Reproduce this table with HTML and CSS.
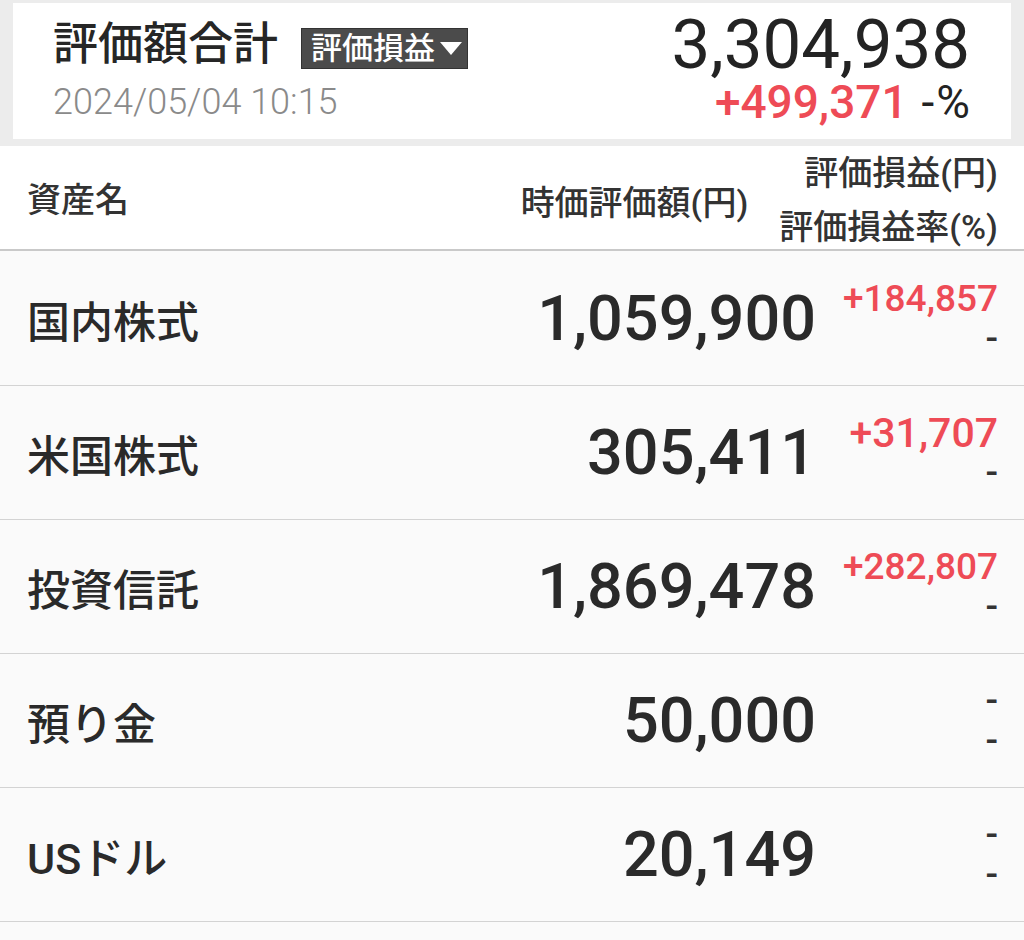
FILE: index.html
```html
<!DOCTYPE html>
<html lang="ja">
<head>
<meta charset="utf-8">
<title>評価額合計</title>
<link rel="stylesheet" href="styles.css">
</head>
<body>
<div class="summary">
  <div class="card">
    <div class="card-left">
      <div class="title-row">
        <span class="title">評価額合計</span>
        <span class="badge">評価損益<span class="caret"></span></span>
      </div>
      <div class="date">2024/05/04 10:15</div>
    </div>
    <div class="card-right">
      <div class="total">3,304,938</div>
      <div class="total-gain"><span class="plus">+499,371</span><span class="total-rate">-%</span></div>
    </div>
  </div>
</div>

<div class="table-head">
  <div class="th-name">資産名</div>
  <div class="th-value">時価評価額(円)</div>
  <div class="th-gain">
    <div>評価損益(円)</div>
    <div>評価損益率(%)</div>
  </div>
</div>

<div class="rows">
  <div class="row">
    <div class="name">国内株式</div>
    <div class="value">1,059,900</div>
    <div class="gain"><div class="pos">+184,857</div><div class="dash">-</div></div>
  </div>
  <div class="row">
    <div class="name">米国株式</div>
    <div class="value">305,411</div>
    <div class="gain"><div class="pos pos-lg">+31,707</div><div class="dash">-</div></div>
  </div>
  <div class="row">
    <div class="name">投資信託</div>
    <div class="value">1,869,478</div>
    <div class="gain"><div class="pos">+282,807</div><div class="dash">-</div></div>
  </div>
  <div class="row">
    <div class="name">預り金</div>
    <div class="value">50,000</div>
    <div class="gain"><div class="dash">-</div><div class="dash">-</div></div>
  </div>
  <div class="row">
    <div class="name">USドル</div>
    <div class="value">20,149</div>
    <div class="gain"><div class="dash">-</div><div class="dash">-</div></div>
  </div>
</div>
</body>
</html>
```

FILE: styles.css
```css
html, body {
  margin: 0;
  padding: 0;
}

body {
  background: #fafafa;
  font-family: Roboto, "Noto Sans CJK JP", sans-serif;
  color: #2b2b2b;
}

/* ---------- summary card ---------- */
.summary {
  background: #ececec;
  padding: 3px 13px 7px 13px;
}

.card {
  background: #ffffff;
  height: 136px;
  box-sizing: border-box;
  padding: 14px 41px 0 40px;
  display: flex;
  justify-content: space-between;
}

.title-row {
  display: flex;
  align-items: center;
  height: 56px;
}

.title {
  font-size: 45px;
  font-weight: 500;
  line-height: 56px;
  color: #262626;
}

.badge {
  display: inline-flex;
  align-items: center;
  height: 41px;
  box-sizing: border-box;
  margin-left: 23px;
  margin-top: 6px;
  padding: 0 5px 0 9px;
  background: #4b4b4b;
  border: 1px solid #333333;
  color: #ffffff;
  font-size: 31px;
  line-height: 39px;
  font-weight: 500;
}

.caret {
  width: 0;
  height: 0;
  margin-left: 5px;
  border-left: 11px solid transparent;
  border-right: 11px solid transparent;
  border-top: 13px solid #ffffff;
}

.date {
  font-size: 36px;
  font-weight: 300;
  line-height: 58px;
  color: #8a8a8a;
}

.card-right {
  text-align: right;
}

.total {
  font-size: 69px;
  font-weight: 400;
  line-height: 56px;
  color: #232323;
}

.total-gain {
  font-size: 46px;
  font-weight: 500;
  line-height: 58px;
}

.plus {
  color: #ee4b56;
}

.total-rate {
  margin-left: 14px;
  letter-spacing: 2px;
  margin-right: -2px;
  font-weight: 400;
  color: #232323;
}

/* ---------- table header ---------- */
.table-head {
  height: 103px;
  background: #ffffff;
  border-bottom: 2px solid #c9c9c9;
  display: flex;
  align-items: center;
  padding: 0 26px 0 27px;
  font-size: 34px;
  font-weight: 500;
  color: #333333;
}

.th-name {
  flex: 1;
}

.th-value {
  margin-right: 31px;
  margin-top: 6px;
}

.th-gain {
  text-align: right;
  line-height: 54px;
  margin-top: 4px;
}

/* ---------- rows ---------- */
.rows {
  padding-top: 1px;
}

.row {
  height: 133px;
  border-bottom: 1px solid #d3d3d3;
  background: #fafafa;
  display: flex;
  align-items: center;
  padding: 0 26px 0 27px;
}

.name {
  flex: 1;
  font-size: 43px;
  font-weight: 500;
  color: #2a2a2a;
}

.value {
  font-size: 63px;
  font-weight: 500;
  color: #2a2a2a;
  text-align: right;
}

.gain {
  width: 182px;
  text-align: right;
  font-size: 37px;
  line-height: 40px;
  font-weight: 500;
}

.pos {
  color: #ee4b56;
}

.pos-lg {
  font-size: 41px;
}

.dash {
  color: #333333;
}
```
